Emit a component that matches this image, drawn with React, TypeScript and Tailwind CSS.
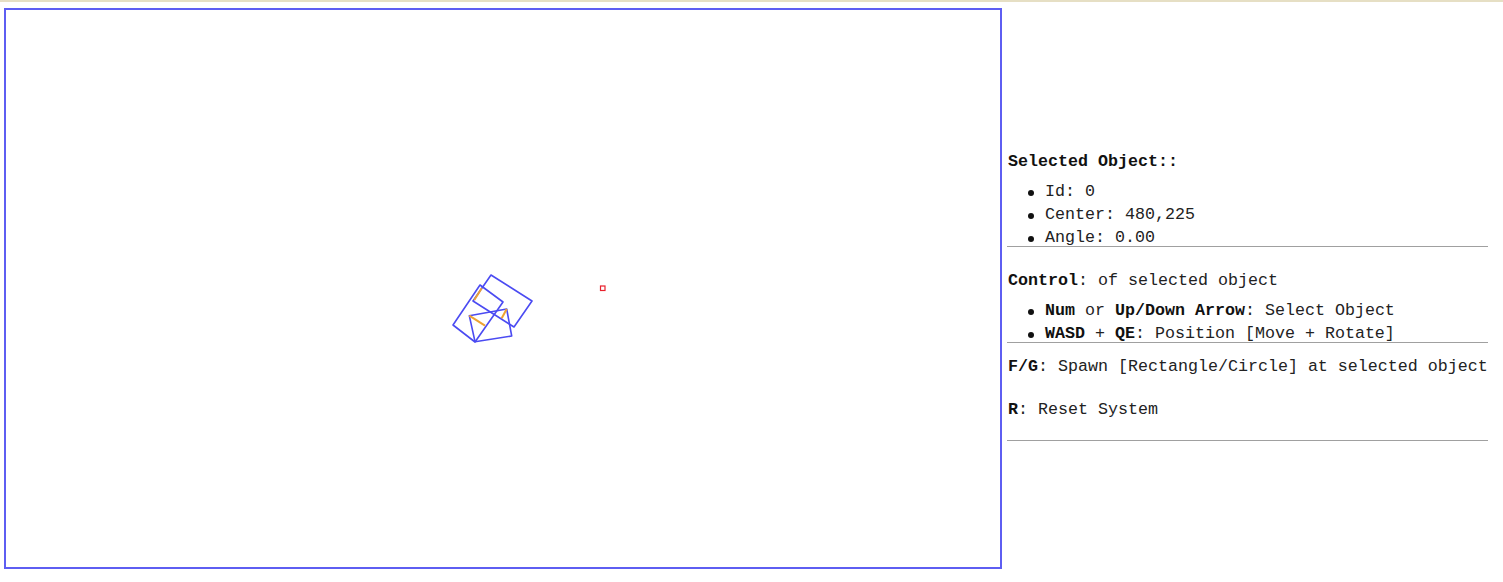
import React from "react";

const OX = 6;
const OY = 10;

function pts(list: number[][]) {
  return list.map(([x, y]) => `${x - OX},${y - OY}`).join(" ");
}

function Bullet({ children }: { children: React.ReactNode }) {
  return (
    <div className="flex items-center h-[23px] leading-[23px]">
      <span className="inline-block w-[6px] h-[6px] rounded-full bg-[#111] ml-[20px] mr-[11px] mt-[3px]" />
      <span>{children}</span>
    </div>
  );
}

export default function App() {
  const A = [
    [491, 275],
    [532, 301],
    [514, 327],
    [473, 301],
  ];
  const B = [
    [480, 285],
    [503, 302],
    [475, 342],
    [453, 325],
  ];
  const C = [
    [469.3, 315.7],
    [506.7, 309],
    [511.7, 336],
    [475, 341.7],
  ];
  return (
    <div className="w-[1503px] h-[582px] bg-white overflow-hidden">
      <div className="h-[2px] bg-[#e6dfc4]" />
      <div className="flex items-start pt-[6px] pl-[4px]">
        <div className="w-[998px] h-[561px] border-2 border-[#5e5ef2] shrink-0">
          <svg width="994" height="557" viewBox="0 0 994 557">
            <g fill="none" stroke="#4b4bf2" strokeWidth="1.6" strokeLinejoin="round">
              <polygon points={pts(A)} />
              <polygon points={pts(B)} />
              <polygon points={pts(C)} />
            </g>
            <g stroke="#eea232" strokeWidth="2">
              <line x1={481.7 - OX} y1={288.3 - OY} x2={474.3 - OX} y2={300 - OY} />
              <line x1={469.3 - OX} y1={315.7 - OY} x2={485 - OX} y2={325.7 - OY} />
              <line x1={506.7 - OX} y1={309 - OY} x2={501.7 - OX} y2={318.3 - OY} />
            </g>
            <rect
              x={600.5 - OX}
              y={286 - OY}
              width="4.5"
              height="4.5"
              fill="none"
              stroke="#e8202c"
              strokeWidth="1.2"
            />
          </svg>
        </div>
        <div
          className="w-[481px] ml-[5px] text-[16.67px] text-[#222]"
          style={{ fontFamily: '"Liberation Mono", "DejaVu Sans Mono", monospace' }}
        >
          <div className="pl-[1px]">
            <div className="mt-[143px] h-[22px] leading-[22px] font-bold text-[#111]">
              Selected Object::
            </div>
            <div className="mt-[7px]">
              <Bullet>Id: 0</Bullet>
              <Bullet>Center: 480,225</Bullet>
              <Bullet>Angle: 0.00</Bullet>
            </div>
          </div>
          <div className="h-px bg-[#a0a0a0] -mt-[3px]" />
          <div className="pl-[1px]">
            <div className="mt-[23px] h-[22px] leading-[22px]">
              <b className="text-[#111]">Control</b>: of selected object
            </div>
            <div className="mt-[7px]">
              <Bullet>
                <b className="text-[#111]">Num</b> or <b className="text-[#111]">Up/Down Arrow</b>: Select Object
              </Bullet>
              <Bullet>
                <b className="text-[#111]">WASD</b> + <b className="text-[#111]">QE</b>: Position [Move + Rotate]
              </Bullet>
            </div>
          </div>
          <div className="h-px bg-[#a0a0a0] -mt-[3px]" />
          <div className="pl-[1px]">
            <div className="mt-[13px] h-[22px] leading-[22px] whitespace-nowrap">
              <b className="text-[#111]">F/G</b>: Spawn [Rectangle/Circle] at selected object
            </div>
            <div className="mt-[21px] h-[22px] leading-[22px]">
              <b className="text-[#111]">R</b>: Reset System
            </div>
          </div>
          <div className="h-px bg-[#a0a0a0] mt-[19px]" />
        </div>
      </div>
    </div>
  );
}
